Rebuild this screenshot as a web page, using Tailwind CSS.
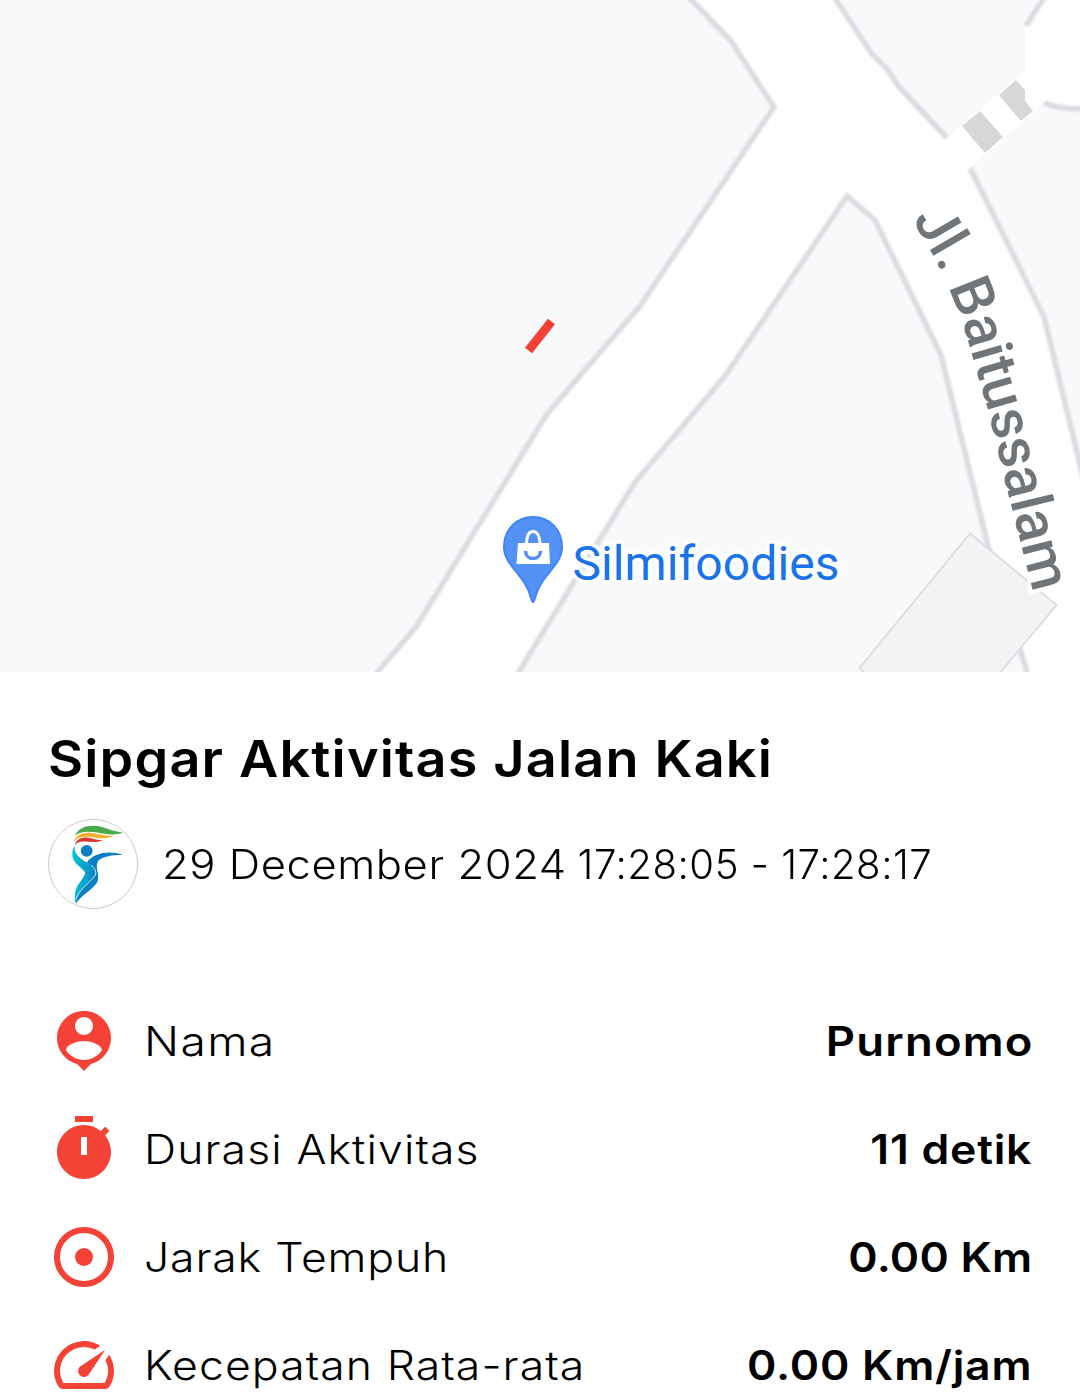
<!DOCTYPE html>
<html lang="id">
<head>
  <meta charset="UTF-8" />
  <meta name="viewport" content="width=device-width, initial-scale=1" />
  <title>Sipgar Aktivitas Jalan Kaki</title>
  <script src="https://cdn.jsdelivr.net/npm/@tailwindcss/browser@4"></script>
</head>
<body class="bg-white text-black w-[1080px] h-[1392px] overflow-hidden font-['Inter',sans-serif]">

  <!-- Map -->
  <section class="h-[672px] bg-white">
    <svg class="block" width="1080" height="672" viewBox="0 0 1080 672">
      <defs>
        <filter id="soft" x="-5%" y="-5%" width="110%" height="110%"><feGaussianBlur stdDeviation="0.9" /></filter>
        <path id="street" d="M912 219 L933 255 C946 281 958 308 966 334 L988 410 L1013 513 L1047 645" />
      </defs>

      <!-- Blocks -->
      <g fill="#f8f9fb">
        <path d="M0 0H690L731 41L774 107L640 306L548 414L417 627L378 672H0Z" />
        <path d="M836 0L871 53L893 77L900 88L947 138L1025 71V26L1042 0Z" />
        <path d="M847 196L875 220L941 355L990 550L1028 672H520L636 482L725 376Z" />
        <path d="M970 168L1044 317L1080 470V108Q1062 112 1046 102Z" />
      </g>
      <g fill="none" stroke="#dadce0" stroke-width="5.500" filter="url(#soft)">
        <path d="M688 -4L731 41L774 107L640 306L547 414L416 627L373 677" />
        <path d="M833 -5L871 53L887 69L899 87L947 138" />
        <path d="M1026 26L1045 -4" />
        <path d="M515 678L635 482L725 376L847 196L875 220L941 355L989 550L1029 678" />
        <path d="M970 168L1044 317L1085 485" />
        <path d="M1043 102Q1062 111 1084 108" />
      </g>

      <!-- Crossing -->
      <path d="M945 141L1026 71H1036L1046 101L968 169Z" fill="#fff" />
      <path d="M962 126L980 111L1003 137L985 153ZM999 95L1016 80L1025 90V101L1033 111L1021 121Z" fill="#d7d7d7" />

      <!-- Building -->
      <path d="M970 533.5L1056.500 605L999 674H866L859.500 668Z" fill="#f1f3f4" stroke="#dadce0" stroke-width="1.800" />

      <!-- Walked track -->
      <path d="M528.500 350.500L551.500 321.500" stroke="#f44336" stroke-width="9" />

      <!-- Place pin -->
      <path d="M533 517C516 517 504 530 504 547C504 566 525 574 531 598Q533 606 535 598C541 574 562 566 562 547C562 530 550 517 533 517Z" fill="#5491f5" stroke="#4285f4" stroke-width="2" />
      <path d="M518 543H549L550 564H516.500Z" fill="#fff" />
      <path d="M526.500 545C526.500 536 529 531.500 533 531.500S540 536 540 545" fill="none" stroke="#fff" stroke-width="3" />
      <path d="M525.500 551C526 561 540 561 540.500 551" fill="none" stroke="#5491f5" stroke-width="3.500" />

      <text x="572.500" y="579.500" textLength="267" class="font-['Roboto',sans-serif] text-[48px]" fill="#1a73e8" stroke="#fff" stroke-width="7" stroke-linejoin="round" paint-order="stroke">Silmifoodies</text>
      <text class="font-['Roboto',sans-serif] text-[57.5px] font-medium" fill="#70757a" stroke="#fff" stroke-width="8" stroke-linejoin="round" paint-order="stroke"><textPath href="#street" textLength="395">Jl. Baitussalam</textPath></text>
    </svg>
  </section>

  <!-- Activity -->
  <main class="px-12 pt-[54px]">
    <h1 class="origin-left scale-x-[1.07] text-[50.5px] leading-[66px] font-semibold tracking-[1.08px] whitespace-nowrap">Sipgar Aktivitas Jalan Kaki</h1>

    <div class="mt-[27px] flex items-center gap-6">
      <svg class="shrink-0" width="90" height="90" viewBox="0 0 90 90">
        <defs>
          <linearGradient id="body" x1="0" y1="0" x2="1" y2="0">
            <stop offset="0" stop-color="#00c4d8" />
            <stop offset="1" stop-color="#0a84c4" />
          </linearGradient>
        </defs>
        <circle cx="45" cy="45" r="44.600" fill="#fff" stroke="#b5b5b5" stroke-width="0.700" />
        <path d="M27 17C31 7 43 5 54 8C62 11 69 13 75 13.500C67 17 57 15 49 13.500C40 12 32 12 27 17Z" fill="#4aab4e" />
        <path d="M26 23C27 15 38 12 47 14.500C54 16 60 17 66 16.500C58 21 50 19 43 18C35 17 29 18 26 23Z" fill="#f2b030" />
        <path d="M27 26C28 19 37 17 44 19.500C48 21 51 21 55 21C49 24 43 23 38 22.500C33 22 29 23 27 26Z" fill="#d8392f" />
        <circle cx="38.700" cy="31.800" r="5.900" fill="#0a7fc1" />
        <path d="M27 26C22 35 24 42 32 48L37 53C38 56 33 61 30 66C26 73 27 79 27 84C31 76 37 68 44 61C50 56 49 51 45 47C36 41 25 38 27 26Z" fill="url(#body)" />
        <path d="M39 43C46 34 61 31 75 36C64 36 55 37 50 42C47 48 51 54 50 61C48 69 35 74 27.500 85C30 75 35 68 43 61C50 55 47 49 39 43Z" fill="#0a7fc1" />
        <path d="M28 80C31 71 39 66 46 58C49 54 48 50 43 46" fill="none" stroke="#fff" stroke-width="0.800" />
      </svg>
      <p class="flex w-[770px] translate-y-px justify-between text-[40.5px] leading-[56px] font-light whitespace-nowrap">
        <span class="origin-left scale-x-[1.075] tracking-[0.53px]">29 December 2024</span>
        <span class="origin-right scale-x-[0.99] tracking-[0.53px]">17:28:05 - 17:28:17</span>
      </p>
    </div>

    <ul class="mt-24 flex flex-col gap-9 text-[40.5px] leading-[72px] whitespace-nowrap">
      <li class="flex h-[72px] items-center">
        <svg class="mr-6 shrink-0" width="72" height="72" viewBox="0 0 24 24" fill="#f44336"><path d="M12 2c-4.970 0-9 4.030-9 9 0 4.170 2.840 7.670 6.690 8.690L12 22l2.310-2.310C18.160 18.670 21 15.170 21 11c0-4.970-4.030-9-9-9zm0 2c1.660 0 3 1.340 3 3s-1.340 3-3 3-3-1.340-3-3 1.340-3 3-3zm0 14.300c-2.500 0-4.710-1.280-6-3.220.03-1.990 4-3.080 6-3.080 1.990 0 5.970 1.090 6 3.080-1.290 1.940-3.500 3.220-6 3.220z" /></svg>
        <span class="origin-left translate-y-px scale-x-[1.14] font-light tracking-[1.2px]">Nama</span>
        <span class="ml-auto -mr-[1.2px] origin-right translate-y-px scale-x-[1.12] font-[560] tracking-[1.1px]">Purnomo</span>
      </li>
      <li class="flex h-[72px] items-center">
        <svg class="mr-6 shrink-0" width="72" height="72" viewBox="0 0 24 24" fill="#f44336"><path d="M9 1h6v2H9zm10.030 6.390 1.420-1.420c-.43-.51-.9-.99-1.410-1.410l-1.420 1.420C16.070 4.740 14.120 4 12 4c-4.970 0-9 4.030-9 9s4.020 9 9 9 9-4.030 9-9c0-2.120-.74-4.070-1.970-5.610zM13 14h-2V8h2v6z" /></svg>
        <span class="origin-left translate-y-px scale-x-110 font-light tracking-[1px]">Durasi Aktivitas</span>
        <span class="ml-auto -mr-[0.5px] origin-right translate-y-px scale-x-110 font-[560] tracking-[0.7px]">11 detik</span>
      </li>
      <li class="flex h-[72px] items-center">
        <svg class="mr-6 shrink-0" width="72" height="72" viewBox="0 0 24 24" fill="#f44336"><circle cx="12" cy="12" r="9" fill="none" stroke="#f44336" stroke-width="2" /><circle cx="12" cy="12" r="3" /></svg>
        <span class="origin-left translate-y-px scale-x-110 font-light tracking-[0.75px]">Jarak Tempuh</span>
        <span class="ml-auto origin-right translate-y-px scale-x-110 font-[560] tracking-[0.2px]">0.00 Km</span>
      </li>
      <li class="flex h-[72px] items-center">
        <svg class="mr-6 shrink-0" width="72" height="72" viewBox="0 0 24 24" fill="#f44336"><path d="M20.380 8.570l-1.230 1.850a8 8 0 0 1-.22 7.580H5.070A8 8 0 0 1 15.580 6.850l1.850-1.230A10 10 0 0 0 3.350 19a2 2 0 0 0 1.720 1h13.850a2 2 0 0 0 1.740-1 10 10 0 0 0-.27-10.440zm-9.790 6.840a2 2 0 0 0 2.830 0l5.660-8.490-8.490 5.660a2 2 0 0 0 0 2.830z" /></svg>
        <span class="origin-left translate-y-px scale-x-110 font-light tracking-[0.96px]">Kecepatan Rata-rata</span>
        <span class="ml-auto -mr-[0.5px] origin-right translate-y-px scale-x-110 font-[560] tracking-[0.7px]">0.00 Km/jam</span>
      </li>
    </ul>
  </main>

</body>
</html>
